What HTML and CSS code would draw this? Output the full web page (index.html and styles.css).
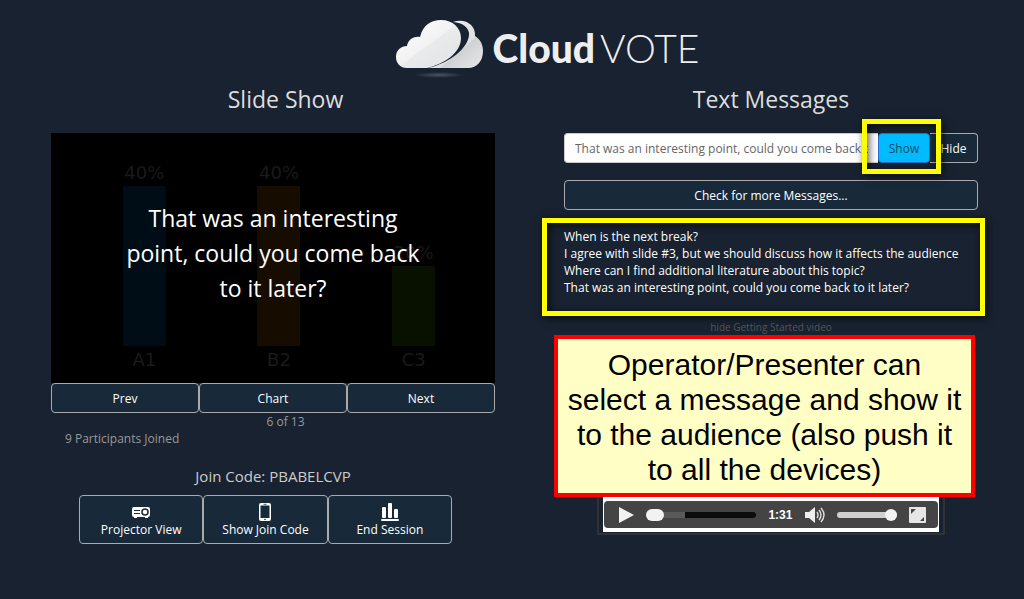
FILE: index.html
```
<!DOCTYPE html>
<html lang="en">

<head>
  <meta charset="UTF-8">
  <meta name="viewport" content="width=device-width, initial-scale=1.0">
  <title>CloudVOTE</title>
  <link rel="stylesheet" href="styles.css">
</head>

<body>
  <header class="logo">
    <svg class="logo-cloud" viewBox="0 0 90 62" aria-hidden="true">
      <defs>
        <linearGradient id="front" x1="0" y1="0" x2="1" y2="1">
          <stop offset="0" stop-color="#ffffff" />
          <stop offset="0.5" stop-color="#f2f2f3" />
          <stop offset="0.52" stop-color="#e9eaeb" />
          <stop offset="1" stop-color="#e2e3e4" />
        </linearGradient>
        <linearGradient id="back" x1="0" y1="0" x2="1" y2="1">
          <stop offset="0" stop-color="#f4f4f4" />
          <stop offset="0.6" stop-color="#dddfe0" />
          <stop offset="0.62" stop-color="#cfd2d4" />
          <stop offset="1" stop-color="#e8e8e8" />
        </linearGradient>
        <radialGradient id="ground">
          <stop offset="0" stop-color="#4a5563" />
          <stop offset="1" stop-color="#4a5563" stop-opacity="0" />
        </radialGradient>
      </defs>
      <path fill="url(#front)" d="M12 50 C5 50 1 45 1 39 C1 32 6 28 12 28 C13 22 18 18 25 19 C28 7 36 2 46 2 C58 2 66 10 66 20 C66 35 49 46 32 50 Z" />
      <path fill="url(#back)" d="M58 4 C70 0 81 7 80 18 C85 21 88 26 88 33 C88 43 82 50 73 50 L33 50 C55 45 75 29 74 15 C73 9 68 5 58 4 Z" />
      <ellipse cx="44" cy="57" rx="25" ry="3" fill="url(#ground)" />
    </svg>
    <span class="logo-text"><b>Cloud</b><span class="logo-vote">VOTE</span></span>
  </header>

  <main class="columns">
    <section class="slides">
      <h2>Slide Show</h2>
      <div class="stage">
        <div class="chart">
          <div class="bar-group">
            <span>40%</span>
            <div class="bar blue" style="height: 160px"></div>
            <span>A1</span>
          </div>
          <div class="bar-group">
            <span>40%</span>
            <div class="bar orange" style="height: 160px"></div>
            <span>B2</span>
          </div>
          <div class="bar-group">
            <span>20%</span>
            <div class="bar green" style="height: 80px"></div>
            <span>C3</span>
          </div>
        </div>
        <p class="shown-message">That was an interesting point, could you come back to it later?</p>
      </div>
      <div class="button-row nav-buttons">
        <button type="button">Prev</button>
        <button type="button">Chart</button>
        <button type="button">Next</button>
      </div>
      <p class="slide-count">6 of 13</p>
      <p class="participants">9 Participants Joined</p>
      <p class="join-code">Join Code: PBABELCVP</p>
      <div class="button-row session-buttons">
        <button type="button">
          <svg width="18" height="18" viewBox="0 0 18 18" aria-hidden="true">
            <path fill="#fff" d="M2 4 H16 Q18 4 18 6 V12 Q18 14 16 14 V15 H13 V14 H5 V15 H2 V14 Q0 14 0 12 V6 Q0 4 2 4 Z" />
            <path stroke="#182a3a" d="M2 7.5 H8 M2 10.5 H8" />
            <circle cx="13" cy="9" r="3" fill="#fff" stroke="#182a3a" stroke-width="1.5" />
          </svg>
          Projector View
        </button>
        <button type="button">
          <svg width="18" height="18" viewBox="0 0 18 18" aria-hidden="true">
            <rect x="3" y="0" width="12" height="18" rx="2" fill="#fff" />
            <rect x="4.5" y="2.5" width="9" height="12.5" fill="#182a3a" />
            <circle cx="9" cy="16.5" r="0.8" fill="#182a3a" />
            <path stroke="#182a3a" stroke-width="0.8" d="M7.5 1.3 H10.5" />
          </svg>
          Show Join Code
        </button>
        <button type="button">
          <svg width="18" height="18" viewBox="0 0 18 18" fill="#fff" aria-hidden="true">
            <rect x="1" y="4" width="4" height="11" rx="1" />
            <rect x="7" y="0" width="4" height="15" rx="1" />
            <rect x="13" y="6" width="4" height="9" rx="1" />
            <rect x="0" y="16" width="18" height="2" rx="1" />
          </svg>
          End Session
        </button>
      </div>
    </section>

    <section class="messages">
      <h2>Text Messages</h2>
      <form class="message-form">
        <input type="text" aria-label="Message" value="That was an interesting point, could you come back to it later?">
        <div class="show-wrap">
          <button type="button" class="show">Show</button>
          <div class="highlight show-highlight"></div>
        </div>
        <button type="button" class="hide">Hide</button>
      </form>
      <button type="button" class="check">Check for more Messages...</button>
      <div class="list-wrap">
        <ul class="message-list">
          <li>When is the next break?</li>
          <li>I agree with slide #3, but we should discuss how it affects the audience</li>
          <li>Where can I find additional literature about this topic?</li>
          <li>That was an interesting point, could you come back to it later?</li>
        </ul>
        <div class="highlight list-highlight"></div>
      </div>
      <a class="hide-video" href="#video">hide Getting Started video</a>
      <div class="video-wrap">
        <div class="video" id="video">
          <div class="controls">
            <button type="button" aria-label="Play">
              <svg width="16" height="18" viewBox="0 0 16 18"><path fill="#f2f2f2" d="M1 1 L16 9 L1 17 Z" /></svg>
            </button>
            <input class="seek" type="range" aria-label="Seek" min="0" max="91" value="0">
            <span class="duration">1:31</span>
            <button type="button" aria-label="Mute">
              <svg width="20" height="18" viewBox="0 0 20 18">
                <path fill="#eee" d="M0 6 H4 L10 1 V17 L4 12 H0 Z" />
                <path fill="none" stroke="#ddd" stroke-width="1.4" d="M12 6 Q14 9 12 12 M14 4 Q18 9 14 14 M16 2 Q22 9 16 16" />
              </svg>
            </button>
            <input class="volume" type="range" aria-label="Volume" min="0" max="100" value="100">
            <button type="button" aria-label="Full screen">
              <svg width="17" height="16" viewBox="0 0 17 16">
                <rect width="17" height="16" rx="1" fill="#e6e6e6" />
                <path fill="#444" d="M2 2 H7 L5 4 L4 5 L2 7 Z M15 14 H11 L15 10 Z" />
              </svg>
            </button>
          </div>
        </div>
        <p class="note">Operator/Presenter can select a message and show it to the audience (also push it to all the devices)</p>
      </div>
    </section>
  </main>
</body>

</html>
```

FILE: styles.css
```
* {
  box-sizing: border-box;
}

body {
  margin: 0;
  min-height: 100vh;
  padding: 18px 11px 0 43px;
  background-color: #182230;
  color: #ddd;
  font-family: "Open Sans", "Noto Sans", sans-serif;
  font-size: 12px;
  line-height: 17px;
}

h2 {
  margin: 0 0 18px;
  font-size: 23px;
  font-weight: normal;
  line-height: 32px;
  text-align: center;
}

p {
  margin: 0;
}

button {
  padding: 0;
  border: 1px solid #aaa;
  border-radius: 4px;
  background-color: #182a3a;
  color: #fff;
  font: inherit;
}

.logo {
  display: flex;
  justify-content: center;
  gap: 8px;
  height: 65px;
  padding-left: 38px;
}

.logo-cloud {
  width: 90px;
  height: 62px;
}

.logo-text {
  color: #eee;
  font-family: Lato, sans-serif;
  font-size: 39px;
  line-height: 60px;
}

.logo-text b {
  font-weight: 900;
}

.logo-vote {
  margin-left: 5px;
  font-weight: 300;
}

.columns {
  display: grid;
  grid-template-columns: 1fr 1fr;
}

/* slide show */

.stage,
.nav-buttons,
.join-code {
  margin: 0 33px 0 8px;
}

.stage {
  position: relative;
  height: 250px;
  background-color: #000;
}

.chart {
  display: grid;
  grid-template-columns: repeat(3, 1fr);
  height: 100%;
  padding: 0 14px 10px 26px;
  color: #1a1a1a;
  font-family: "DejaVu Sans", sans-serif;
  font-size: 18px;
  line-height: 27px;
}

.bar-group {
  display: flex;
  flex-direction: column;
  justify-content: flex-end;
  align-items: center;
}

.bar {
  width: 43px;
}

.blue {
  background-color: #000d17;
}

.orange {
  background-color: #170c00;
}

.green {
  background-color: #081000;
}

/* message shown over the slide */
.shown-message {
  position: absolute;
  inset: 0;
  display: flex;
  align-items: center;
  padding: 0 64px 10px;
  color: #fff;
  font-size: 23px;
  line-height: 35px;
  text-align: center;
}

.button-row {
  display: grid;
  grid-template-columns: repeat(3, 1fr);
}

.nav-buttons button {
  height: 30px;
}

.slide-count,
.participants {
  color: #999;
}

.slide-count {
  text-align: center;
}

.participants {
  padding-left: 22px;
}

.join-code {
  padding: 17px 0 7px;
  color: #ccc;
  font-size: 15px;
  line-height: 24px;
  text-align: center;
}

.session-buttons {
  margin: 0 76px 0 36px;
}

.session-buttons button {
  display: flex;
  flex-direction: column;
  align-items: center;
  padding: 7px 0 5px;
}

/* text messages */

.messages {
  padding: 0 35px 0 36px;
}

.message-form {
  display: flex;
  height: 30px;
}

.message-form input {
  flex: 1;
  min-width: 0;
  padding: 0 10px;
  border: 1px solid #ccc;
  border-right: 0;
  border-radius: 4px 0 0 4px;
  background-color: #fff;
  color: #666;
  font: inherit;
}

.show-wrap {
  position: relative;
}

.show {
  width: 52px;
  height: 30px;
  border-color: #2a6ed0;
  background-color: #00bbff;
  color: #1c4a66;
}

.hide {
  width: 48px;
  border-left: 0;
  border-radius: 0 4px 4px 0;
}

.check {
  display: block;
  width: 100%;
  height: 30px;
  margin-top: 17px;
}

.highlight {
  position: absolute;
  border: 5px solid #ff0;
  box-shadow: 2px 2px 8px #000a, inset 2px 2px 8px #000a;
}

.show-highlight {
  inset: -14px -11px -11px -16px;
  pointer-events: none;
}

.list-wrap {
  position: relative;
  margin-top: 18px;
}

.message-list {
  margin: 0;
  padding: 0;
  color: #fff;
  list-style: none;
}

.list-highlight {
  inset: -10px -7px -20px -22px;
  pointer-events: none;
}

.hide-video {
  display: block;
  margin-top: 24px;
  color: #555;
  font-size: 10px;
  line-height: 14px;
  text-align: center;
  text-decoration: none;
}

.video-wrap {
  position: relative;
}

.video {
  display: flex;
  align-items: flex-end;
  height: 200px;
  margin: 1px 33px 0;
  padding: 4px 4px 1px;
  border: 2px solid #303234;
  background: #fff content-box;
}

.controls {
  display: flex;
  flex: 1;
  align-items: center;
  justify-content: space-between;
  height: 27px;
  margin: 0 1px 4px;
  padding: 0 12px 0 14px;
  border-radius: 4px;
  background-color: #444;
}

.controls button {
  display: flex;
  border: 0;
  background: none;
}

.controls input {
  height: 12px;
  margin: 0;
  appearance: none;
  background: none;
}

.controls input::-webkit-slider-runnable-track {
  height: 6px;
  border-radius: 3px;
}

.controls input::-webkit-slider-thumb {
  appearance: none;
  width: 12px;
  height: 12px;
  margin-top: -3px;
  border-radius: 6px;
  background-color: #f2f2f2;
}

.seek {
  width: 110px;
}

.controls .seek::-webkit-slider-runnable-track {
  background: linear-gradient(90deg, #5a5a5a 35%, #0c0c0c 35%);
}

.controls .seek::-webkit-slider-thumb {
  width: 18px;
}

.volume {
  width: 60px;
}

.controls .volume::-webkit-slider-runnable-track {
  background-color: #d0d0d0;
}

.duration {
  color: #fff;
  font: bold 12px "Liberation Sans", sans-serif;
}

/* note lying over the video */
.note {
  position: absolute;
  inset: 0 3px auto -10px;
  padding: 8px 8px 6px;
  border: 4px solid #f00;
  background-color: #ffffc5;
  color: #000;
  font-family: "Liberation Sans", Arial, sans-serif;
  font-size: 30px;
  line-height: 35px;
  text-align: center;
}
```
